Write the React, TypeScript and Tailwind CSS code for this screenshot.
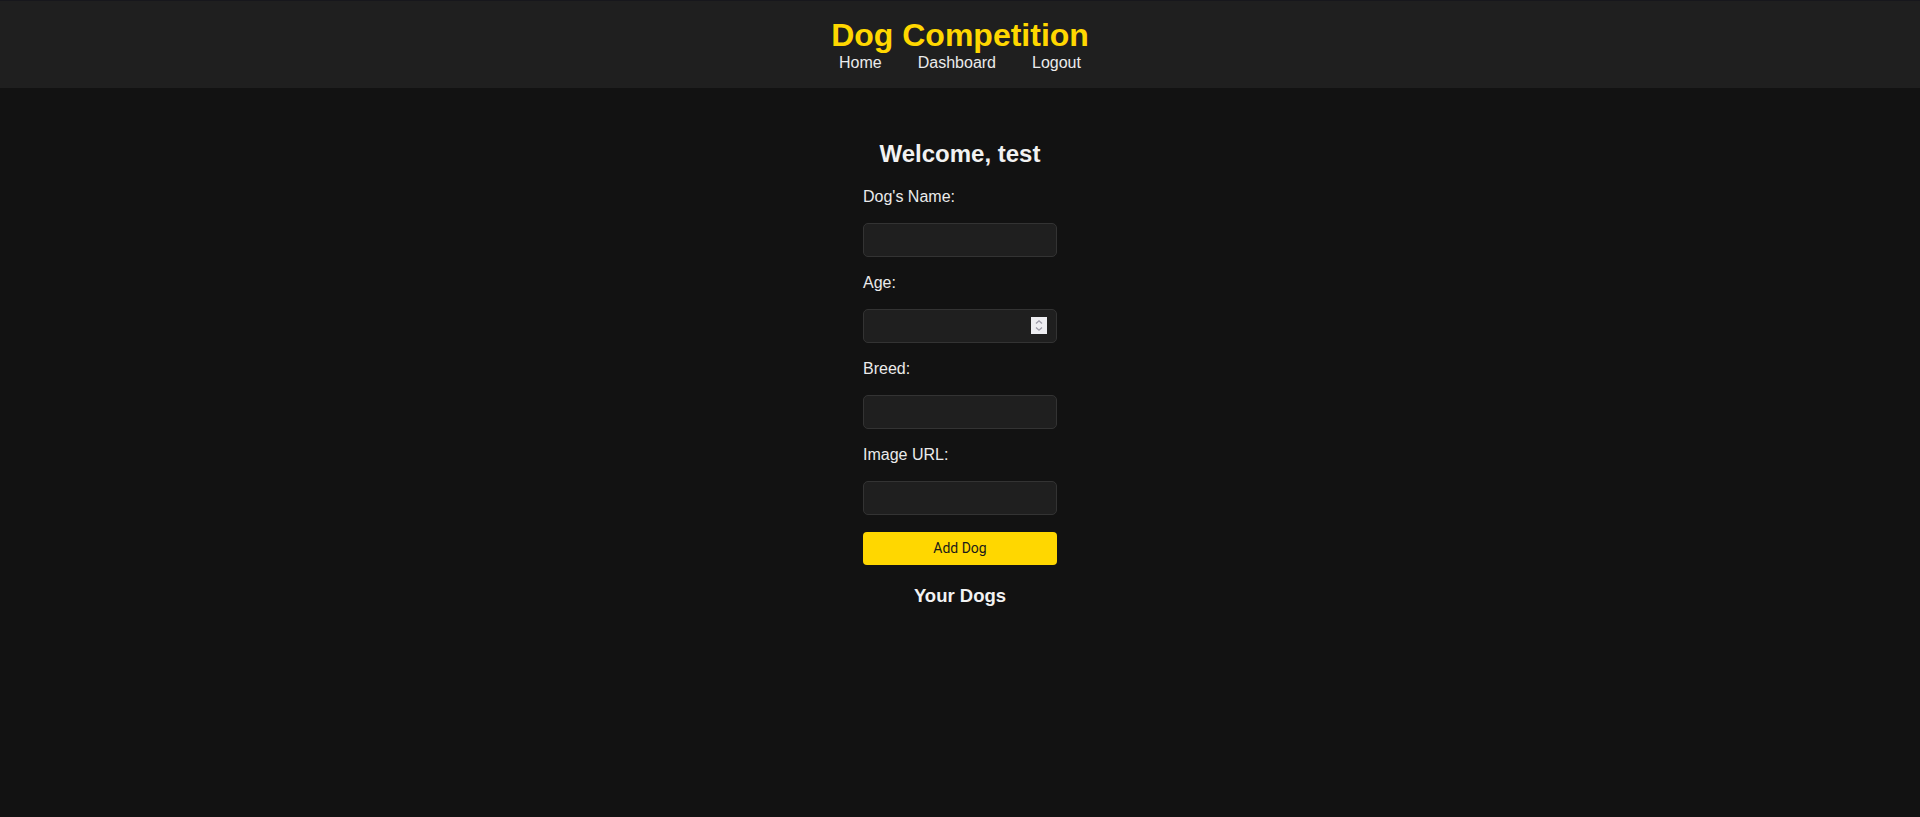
import React, { useState } from "react";

const fields = [
  { id: "name", label: "Dog's Name:", type: "text" },
  { id: "age", label: "Age:", type: "number" },
  { id: "breed", label: "Breed:", type: "text" },
  { id: "image", label: "Image URL:", type: "text" },
];

const App: React.FC = () => {
  const [values, setValues] = useState<{ [key: string]: string }>({});

  return (
    <div className="min-h-screen bg-[#121212] font-['Liberation_Sans',Arial,sans-serif] text-[#ebebeb]">
      <header className="border-t border-[#17171c] bg-[#1f1f1f] py-4 text-center">
        <h1 className="text-[32px] font-bold leading-[1.15] text-[#ffd700]">
          Dog Competition
        </h1>
        <nav className="flex justify-center gap-9 text-base leading-[1.15]">
          <a href="#" className="text-[#ebebeb]">Home</a>
          <a href="#" className="text-[#ebebeb]">Dashboard</a>
          <a href="#" className="text-[#ebebeb]">Logout</a>
        </nav>
      </header>

      <main className="flex flex-col items-center pt-8">
        <h2 className="my-5 text-2xl font-bold leading-[1.15] text-[#f2f2f2]">
          Welcome, test
        </h2>
        <form
          className="flex w-[194px] flex-col gap-[16.8px]"
          onSubmit={(e) => e.preventDefault()}
        >
          {fields.map((field) => (
            <React.Fragment key={field.id}>
              <label htmlFor={field.id} className="text-base leading-[1.15]">
                {field.label}
              </label>
              <div className="relative">
                <input
                  id={field.id}
                  type={field.type}
                  value={values[field.id] ?? ""}
                  onChange={(e) =>
                    setValues({ ...values, [field.id]: e.target.value })
                  }
                  className="block h-[34px] w-full rounded-[5px] border border-[#333333] bg-[#1f1f1f] px-2 text-white outline-none [appearance:textfield] [&::-webkit-inner-spin-button]:appearance-none [&::-webkit-outer-spin-button]:appearance-none"
                />
                {field.type === "number" && (
                  // spinner like the browser's own one
                  <div className="pointer-events-none absolute right-[10px] top-2 flex h-[17px] w-4 items-center justify-center bg-[#ededf1]">
                    <svg width="10" height="13" viewBox="0 0 10 13" fill="none">
                      <path d="M2 4.5 L5 1.8 L8 4.5" stroke="#9d9ba8" strokeWidth="1.3" />
                      <path d="M2 8.5 L5 11.2 L8 8.5" stroke="#9d9ba8" strokeWidth="1.3" />
                    </svg>
                  </div>
                )}
              </div>
            </React.Fragment>
          ))}
          <button
            type="submit"
            className="h-[33px] w-full rounded-[4px] bg-[#ffd700] font-['Roboto',sans-serif] text-[14px] text-[#1a1a1a]"
          >
            Add Dog
          </button>
        </form>
        <h3 className="mt-5 text-[18.5px] font-bold leading-[1.15] text-[#f2f2f2]">
          Your Dogs
        </h3>
      </main>
    </div>
  );
};

export default App;
